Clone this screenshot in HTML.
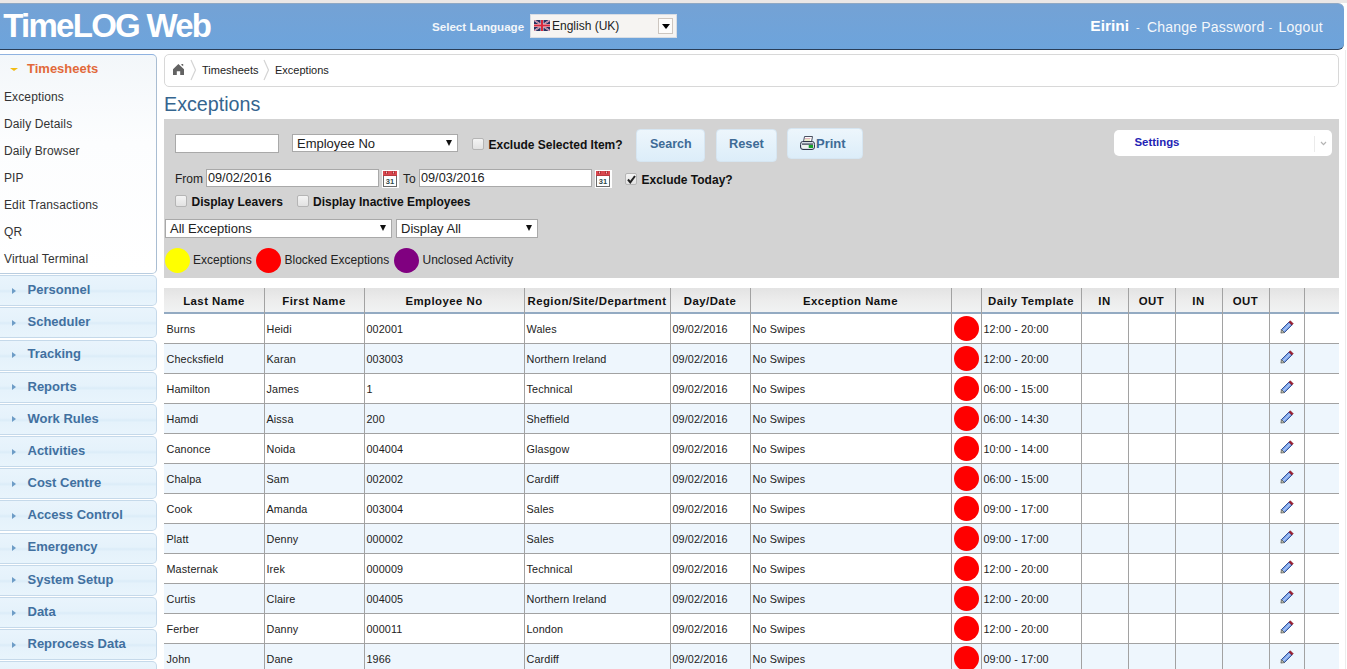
<!DOCTYPE html><html><head><meta charset="utf-8"><style>
*{margin:0;padding:0;box-sizing:border-box}
html,body{width:1347px;height:669px;overflow:hidden;background:#fff;font-family:"Liberation Sans",sans-serif;position:relative}
.a{position:absolute;white-space:nowrap}
.t{position:absolute;white-space:nowrap;line-height:1}
.cb{position:absolute;width:12px;height:12px;border:1px solid #b5b5b5;border-radius:2px;background:linear-gradient(#f4f4f4,#e2e2e2)}
.sel{position:absolute;background:#fff;border:1px solid #a9a9a9}
.btn{position:absolute;border-radius:4px;background:linear-gradient(#edf6fc,#dcedf9);border:1px solid #d6e6f2}
.sh{position:absolute;left:0;width:157px;height:31px;border:1px solid #c5d9ea;border-left:none;border-radius:0 5px 5px 0;background:linear-gradient(#e9f4fc 0%,#e5f2fb 45%,#dbecf8 52%,#e5f2fb 60%,#e8f4fc 100%)}
.tri{position:absolute;width:0;height:0;border-top:3.5px solid transparent;border-bottom:3.5px solid transparent;border-left:4.5px solid #6d9cc6}
</style></head><body>
<div class="a" style="left:0;top:0;width:1347px;height:3px;background:#ebe7e6"></div>
<div class="a" style="left:0;top:3px;width:1344px;height:47px;background:linear-gradient(#74a2d5,#6da4dc);border-top:1px solid #8fa8c4;border-bottom:1px solid #2a3e58;border-radius:0 6px 6px 0"></div>
<div class="a" style="left:1345px;top:50px;width:1px;height:619px;background:#ececec"></div>
<div class="t" style="left:3.3px;top:8.5px;font-size:33px;letter-spacing:-1.75px;font-weight:bold;color:#fff">TimeLOG Web</div>
<div class="t" style="left:432px;top:21px;font-size:11.6px;font-weight:bold;color:#f2f6fa">Select Language</div>
<div class="a" style="left:530px;top:14px;width:147px;height:24px;background:#f6f4f2;border:1px solid #d8dde4"></div>
<svg class="a" style="left:534px;top:20px" width="16" height="11" viewBox="0 0 16 11"><rect width="16" height="11" fill="#27305e"/><path d="M0 0L16 11M16 0L0 11" stroke="#d8d8e8" stroke-width="1.6"/><path d="M0 0L16 11M16 0L0 11" stroke="#c03050" stroke-width="0.6"/><rect x="6.5" y="0" width="3" height="11" fill="#e8e0e8"/><rect x="0" y="4" width="16" height="3" fill="#e8e0e8"/><rect x="7" y="0" width="2" height="11" fill="#d8283c"/><rect x="0" y="4.5" width="16" height="2" fill="#d8283c"/></svg>
<div class="t" style="left:552px;top:19.6px;font-size:12px;color:#222">English (UK)</div>
<div class="a" style="left:658px;top:18px;width:15px;height:16px;background:#fdfcfb;border:1px solid #cdc6c0"></div>
<div class="a" style="left:662px;top:24px;width:0;height:0;border-left:4px solid transparent;border-right:4px solid transparent;border-top:5px solid #000"></div>
<div class="t" style="left:1090.3px;top:18px;font-size:15.5px;font-weight:bold;color:#fff">Eirini</div>
<div class="t" style="left:1136px;top:22px;font-size:11px;color:#f4f7fb">-</div>
<div class="t" style="left:1147px;top:20px;font-size:14px;letter-spacing:0.2px;color:#f4f7fb">Change Password</div>
<div class="t" style="left:1268.5px;top:22px;font-size:11px;color:#f4f7fb">-</div>
<div class="t" style="left:1278.5px;top:20px;font-size:14px;letter-spacing:0.25px;color:#f4f7fb">Logout</div>
<div class="a" style="left:0;top:54px;width:157px;height:220px;border:1px solid #a9bdd2;border-top-color:#8fb2e0;border-bottom-color:#b9cde0;border-left:none;border-radius:0 5px 5px 0;background:linear-gradient(#f3f7fa,#fcfdfe 40%,#fff)"></div>
<div class="a" style="left:9.5px;top:67.8px;width:0;height:0;border-left:4.2px solid transparent;border-right:4.2px solid transparent;border-top:3.6px solid #f2bc14"></div>
<div class="t" style="left:27px;top:61.8px;font-size:13px;font-weight:bold;color:#e2693a">Timesheets</div>
<div class="t" style="left:4px;top:90.5px;font-size:12px;letter-spacing:0.12px;color:#333">Exceptions</div>
<div class="t" style="left:4px;top:117.5px;font-size:12px;letter-spacing:0.12px;color:#333">Daily Details</div>
<div class="t" style="left:4px;top:144.5px;font-size:12px;letter-spacing:0.12px;color:#333">Daily Browser</div>
<div class="t" style="left:4px;top:171.5px;font-size:12px;letter-spacing:0.12px;color:#333">PIP</div>
<div class="t" style="left:4px;top:198.5px;font-size:12px;letter-spacing:0.12px;color:#333">Edit Transactions</div>
<div class="t" style="left:4px;top:225.5px;font-size:12px;letter-spacing:0.12px;color:#333">QR</div>
<div class="t" style="left:4px;top:252.5px;font-size:12px;letter-spacing:0.12px;color:#333">Virtual Terminal</div>
<div class="sh" style="top:275.20px"></div>
<div class="tri" style="left:11.8px;top:287.80px"></div>
<div class="t" style="left:27.5px;top:283.10px;font-size:13px;font-weight:bold;color:#4170a0">Personnel</div>
<div class="sh" style="top:307.37px"></div>
<div class="tri" style="left:11.8px;top:319.97px"></div>
<div class="t" style="left:27.5px;top:315.27px;font-size:13px;font-weight:bold;color:#4170a0">Scheduler</div>
<div class="sh" style="top:339.54px"></div>
<div class="tri" style="left:11.8px;top:352.14px"></div>
<div class="t" style="left:27.5px;top:347.44px;font-size:13px;font-weight:bold;color:#4170a0">Tracking</div>
<div class="sh" style="top:371.71px"></div>
<div class="tri" style="left:11.8px;top:384.31px"></div>
<div class="t" style="left:27.5px;top:379.61px;font-size:13px;font-weight:bold;color:#4170a0">Reports</div>
<div class="sh" style="top:403.88px"></div>
<div class="tri" style="left:11.8px;top:416.48px"></div>
<div class="t" style="left:27.5px;top:411.78px;font-size:13px;font-weight:bold;color:#4170a0">Work Rules</div>
<div class="sh" style="top:436.05px"></div>
<div class="tri" style="left:11.8px;top:448.65px"></div>
<div class="t" style="left:27.5px;top:443.95px;font-size:13px;font-weight:bold;color:#4170a0">Activities</div>
<div class="sh" style="top:468.22px"></div>
<div class="tri" style="left:11.8px;top:480.82px"></div>
<div class="t" style="left:27.5px;top:476.12px;font-size:13px;font-weight:bold;color:#4170a0">Cost Centre</div>
<div class="sh" style="top:500.39px"></div>
<div class="tri" style="left:11.8px;top:512.99px"></div>
<div class="t" style="left:27.5px;top:508.29px;font-size:13px;font-weight:bold;color:#4170a0">Access Control</div>
<div class="sh" style="top:532.56px"></div>
<div class="tri" style="left:11.8px;top:545.16px"></div>
<div class="t" style="left:27.5px;top:540.46px;font-size:13px;font-weight:bold;color:#4170a0">Emergency</div>
<div class="sh" style="top:564.73px"></div>
<div class="tri" style="left:11.8px;top:577.33px"></div>
<div class="t" style="left:27.5px;top:572.63px;font-size:13px;font-weight:bold;color:#4170a0">System Setup</div>
<div class="sh" style="top:596.90px"></div>
<div class="tri" style="left:11.8px;top:609.50px"></div>
<div class="t" style="left:27.5px;top:604.80px;font-size:13px;font-weight:bold;color:#4170a0">Data</div>
<div class="sh" style="top:629.07px"></div>
<div class="tri" style="left:11.8px;top:641.67px"></div>
<div class="t" style="left:27.5px;top:636.97px;font-size:13px;font-weight:bold;color:#4170a0">Reprocess Data</div>
<div class="sh" style="top:661.24px"></div>
<div class="tri" style="left:11.8px;top:673.84px"></div>
<div class="t" style="left:27.5px;top:669.14px;font-size:13px;font-weight:bold;color:#4170a0"></div>
<div class="a" style="left:164px;top:54px;width:1175px;height:33px;border:1px solid #d8d8d8;border-radius:5px;background:#fff"></div>
<svg class="a" style="left:172px;top:63px" width="13" height="13" viewBox="0 0 13 13"><path d="M1 6.2 L6.4 0.9 L12 6.2 L12 12 L8.2 12 L8.2 8.3 L4.8 8.3 L4.8 12 L1 12 Z" fill="#636363"/><path d="M9.4 1 H11.2 V3.3 L9.4 1.9Z" fill="#636363"/></svg>
<svg class="a" style="left:190px;top:59px" width="8" height="24" viewBox="0 0 8 24"><path d="M1 1 L5.5 11 L1 21" fill="none" stroke="#d4d4d4" stroke-width="1.2"/></svg>
<svg class="a" style="left:263px;top:59px" width="8" height="24" viewBox="0 0 8 24"><path d="M1 1 L5.5 11 L1 21" fill="none" stroke="#d4d4d4" stroke-width="1.2"/></svg>
<div class="t" style="left:202px;top:64.8px;font-size:11px;color:#222">Timesheets</div>
<div class="t" style="left:275px;top:64.8px;font-size:11px;color:#222">Exceptions</div>
<div class="t" style="left:164px;top:94.8px;font-size:19.7px;color:#35658f">Exceptions</div>
<div class="a" style="left:164px;top:119px;width:1175px;height:159px;background:#d3d3d3"></div>
<div class="sel" style="left:175px;top:134px;width:104px;height:19px"></div>
<div class="sel" style="left:292px;top:134px;width:166px;height:18px"></div>
<div class="t" style="left:297px;top:137px;font-size:13px;color:#222">Employee No</div>
<div class="a" style="left:446px;top:140px;width:0;height:0;border-left:3.5px solid transparent;border-right:3.5px solid transparent;border-top:6px solid #111"></div>
<div class="cb" style="left:472px;top:138px"></div>
<div class="t" style="left:488.5px;top:138.5px;font-size:12px;font-weight:bold;color:#111">Exclude Selected Item?</div>
<div class="btn" style="left:636px;top:129px;width:69px;height:33px"></div>
<div class="t" style="left:650px;top:138.3px;font-size:12.5px;font-weight:bold;color:#3e6b96">Search</div>
<div class="btn" style="left:716px;top:129px;width:61px;height:33px"></div>
<div class="t" style="left:729px;top:138.3px;font-size:12.8px;font-weight:bold;color:#3e6b96">Reset</div>
<div class="btn" style="left:787px;top:128px;width:76px;height:31px"></div>
<svg class="a" style="left:800px;top:136px" width="15" height="14" viewBox="0 0 15 14"><path d="M4.5 0.5 L12.5 0.5 L11.5 6 L3.5 6Z" fill="#fff" stroke="#4a5060" stroke-width="1"/><path d="M5 2.5 H10.5" stroke="#d9a0b0" stroke-width="0.8"/><path d="M5 4 H10" stroke="#c8c870" stroke-width="0.8"/><path d="M2.5 5.5 H12.5 Q14.5 5.5 14.5 8.5 V11 Q14.5 13.5 12 13.5 H3 Q0.5 13.5 0.5 11 V8.5 Q0.5 5.5 2.5 5.5Z" fill="#d8dde4" stroke="#2e3548" stroke-width="1"/><rect x="2" y="7.5" width="11" height="1.2" fill="#3b4252"/><rect x="8.5" y="9" width="4.5" height="3" fill="#17a32a"/><rect x="2" y="9" width="6.5" height="3" fill="#eef2ee"/></svg>
<div class="t" style="left:816px;top:136.5px;font-size:13px;font-weight:bold;color:#3e6b96">Print</div>
<div class="a" style="left:1114px;top:130px;width:218px;height:26px;background:#fff;border-radius:5px"></div>
<div class="t" style="left:1134.5px;top:136.8px;font-size:11.4px;font-weight:bold;color:#2323b4">Settings</div>
<div class="a" style="left:1314px;top:136px;width:1px;height:16px;background:#ebebeb"></div>
<svg class="a" style="left:1320px;top:141px" width="7" height="5" viewBox="0 0 7 5"><path d="M1 1 L3.5 3.6 L6 1" fill="none" stroke="#b4b4b4" stroke-width="1.2"/></svg>
<div class="t" style="left:175px;top:172.5px;font-size:12px;color:#222">From</div>
<div class="sel" style="left:206px;top:169px;width:173px;height:18px"></div>
<div class="t" style="left:208px;top:172px;font-size:12.7px;color:#222">09/02/2016</div>
<div class="a" style="left:382px;top:170px;line-height:0"><svg width="17" height="18" viewBox="0 0 17 18"><rect x="0" y="0" width="17" height="18" fill="#fdfdfd"/><rect x="1.5" y="1.5" width="13" height="15" fill="#fff" stroke="#6a6a6a" stroke-width="1"/><rect x="1" y="1" width="14" height="5" fill="#d9474e"/><rect x="1" y="5" width="14" height="1" fill="#b83a40"/><rect x="3.5" y="1" width="2" height="3" fill="#8e1c22"/><rect x="4" y="1.5" width="1" height="2" fill="#f3c0c0"/><rect x="10.5" y="1" width="2" height="3" fill="#8e1c22"/><rect x="11" y="1.5" width="1" height="2" fill="#f3c0c0"/><text x="8" y="13.6" font-family="Liberation Sans" font-weight="bold" font-size="7.5" text-anchor="middle" fill="#2f4a4a">31</text></svg></div>
<div class="t" style="left:403px;top:172.5px;font-size:12px;color:#222">To</div>
<div class="sel" style="left:419px;top:169px;width:173px;height:18px"></div>
<div class="t" style="left:421px;top:172px;font-size:12.7px;color:#222">09/03/2016</div>
<div class="a" style="left:595px;top:170px;line-height:0"><svg width="17" height="18" viewBox="0 0 17 18"><rect x="0" y="0" width="17" height="18" fill="#fdfdfd"/><rect x="1.5" y="1.5" width="13" height="15" fill="#fff" stroke="#6a6a6a" stroke-width="1"/><rect x="1" y="1" width="14" height="5" fill="#d9474e"/><rect x="1" y="5" width="14" height="1" fill="#b83a40"/><rect x="3.5" y="1" width="2" height="3" fill="#8e1c22"/><rect x="4" y="1.5" width="1" height="2" fill="#f3c0c0"/><rect x="10.5" y="1" width="2" height="3" fill="#8e1c22"/><rect x="11" y="1.5" width="1" height="2" fill="#f3c0c0"/><text x="8" y="13.6" font-family="Liberation Sans" font-weight="bold" font-size="7.5" text-anchor="middle" fill="#2f4a4a">31</text></svg></div>
<div class="cb" style="left:625px;top:173px"></div>
<svg class="a" style="left:626px;top:174px" width="11" height="11" viewBox="0 0 11 11"><path d="M2 5.5 L4.3 8.3 L9 2" fill="none" stroke="#222" stroke-width="2"/></svg>
<div class="t" style="left:641.5px;top:173.5px;font-size:12px;font-weight:bold;color:#111">Exclude Today?</div>
<div class="cb" style="left:175px;top:195px"></div>
<div class="t" style="left:191.5px;top:195.5px;font-size:12px;font-weight:bold;color:#111">Display Leavers</div>
<div class="cb" style="left:297px;top:195px"></div>
<div class="t" style="left:313px;top:195.5px;font-size:12px;font-weight:bold;color:#111">Display Inactive Employees</div>
<div class="sel" style="left:165px;top:219px;width:227px;height:19px"></div>
<div class="t" style="left:170px;top:222px;font-size:13px;color:#222">All Exceptions</div>
<div class="a" style="left:380px;top:225px;width:0;height:0;border-left:3.5px solid transparent;border-right:3.5px solid transparent;border-top:6px solid #111"></div>
<div class="sel" style="left:396px;top:219px;width:142px;height:19px"></div>
<div class="t" style="left:401px;top:222px;font-size:13px;color:#222">Display All</div>
<div class="a" style="left:525.5px;top:225px;width:0;height:0;border-left:3.5px solid transparent;border-right:3.5px solid transparent;border-top:6px solid #111"></div>
<div class="a" style="left:165px;top:248px;width:25px;height:25px;border-radius:50%;background:#ffff00"></div>
<div class="t" style="left:193px;top:253.5px;font-size:12px;color:#222">Exceptions</div>
<div class="a" style="left:256px;top:248px;width:25px;height:25px;border-radius:50%;background:#ff0000"></div>
<div class="t" style="left:284.5px;top:253.5px;font-size:12px;color:#222">Blocked Exceptions</div>
<div class="a" style="left:394px;top:248px;width:25px;height:25px;border-radius:50%;background:#800080"></div>
<div class="t" style="left:422.5px;top:253.5px;font-size:12px;color:#222">Unclosed Activity</div>
<div class="a" style="left:164px;top:288px;width:1175px;height:24px;background:linear-gradient(#e3e3e3,#ececec 50%,#f1f2f3)"></div>
<div class="a" style="left:164px;top:312px;width:1175px;height:2px;background:#93aac2"></div>
<div class="a" style="left:164px;top:314px;width:1175px;height:29px;background:#ffffff"></div>
<div class="a" style="left:164px;top:343px;width:1175px;height:1px;background:#a2a2a2"></div>
<div class="a" style="left:164px;top:344px;width:1175px;height:29px;background:#eef6fd"></div>
<div class="a" style="left:164px;top:373px;width:1175px;height:1px;background:#a2a2a2"></div>
<div class="a" style="left:164px;top:374px;width:1175px;height:29px;background:#ffffff"></div>
<div class="a" style="left:164px;top:403px;width:1175px;height:1px;background:#a2a2a2"></div>
<div class="a" style="left:164px;top:404px;width:1175px;height:29px;background:#eef6fd"></div>
<div class="a" style="left:164px;top:433px;width:1175px;height:1px;background:#a2a2a2"></div>
<div class="a" style="left:164px;top:434px;width:1175px;height:29px;background:#ffffff"></div>
<div class="a" style="left:164px;top:463px;width:1175px;height:1px;background:#a2a2a2"></div>
<div class="a" style="left:164px;top:464px;width:1175px;height:29px;background:#eef6fd"></div>
<div class="a" style="left:164px;top:493px;width:1175px;height:1px;background:#a2a2a2"></div>
<div class="a" style="left:164px;top:494px;width:1175px;height:29px;background:#ffffff"></div>
<div class="a" style="left:164px;top:523px;width:1175px;height:1px;background:#a2a2a2"></div>
<div class="a" style="left:164px;top:524px;width:1175px;height:29px;background:#eef6fd"></div>
<div class="a" style="left:164px;top:553px;width:1175px;height:1px;background:#a2a2a2"></div>
<div class="a" style="left:164px;top:554px;width:1175px;height:29px;background:#ffffff"></div>
<div class="a" style="left:164px;top:583px;width:1175px;height:1px;background:#a2a2a2"></div>
<div class="a" style="left:164px;top:584px;width:1175px;height:29px;background:#eef6fd"></div>
<div class="a" style="left:164px;top:613px;width:1175px;height:1px;background:#a2a2a2"></div>
<div class="a" style="left:164px;top:614px;width:1175px;height:29px;background:#ffffff"></div>
<div class="a" style="left:164px;top:643px;width:1175px;height:1px;background:#a2a2a2"></div>
<div class="a" style="left:164px;top:644px;width:1175px;height:29px;background:#eef6fd"></div>
<div class="a" style="left:164px;top:673px;width:1175px;height:1px;background:#a2a2a2"></div>
<div class="a" style="left:264px;top:288px;width:1px;height:381px;background:#a2a2a2"></div>
<div class="a" style="left:364px;top:288px;width:1px;height:381px;background:#a2a2a2"></div>
<div class="a" style="left:524px;top:288px;width:1px;height:381px;background:#a2a2a2"></div>
<div class="a" style="left:670px;top:288px;width:1px;height:381px;background:#a2a2a2"></div>
<div class="a" style="left:750px;top:288px;width:1px;height:381px;background:#a2a2a2"></div>
<div class="a" style="left:951px;top:288px;width:1px;height:381px;background:#a2a2a2"></div>
<div class="a" style="left:981px;top:288px;width:1px;height:381px;background:#a2a2a2"></div>
<div class="a" style="left:1081px;top:288px;width:1px;height:381px;background:#a2a2a2"></div>
<div class="a" style="left:1128px;top:288px;width:1px;height:381px;background:#a2a2a2"></div>
<div class="a" style="left:1175px;top:288px;width:1px;height:381px;background:#a2a2a2"></div>
<div class="a" style="left:1222px;top:288px;width:1px;height:381px;background:#a2a2a2"></div>
<div class="a" style="left:1269px;top:288px;width:1px;height:381px;background:#a2a2a2"></div>
<div class="a" style="left:1304px;top:288px;width:1px;height:381px;background:#a2a2a2"></div>
<div class="t" style="left:164px;width:100px;text-align:center;top:296px;font-size:11.4px;letter-spacing:0.45px;font-weight:bold;color:#111">Last Name</div>
<div class="t" style="left:264px;width:100px;text-align:center;top:296px;font-size:11.4px;letter-spacing:0.45px;font-weight:bold;color:#111">First Name</div>
<div class="t" style="left:364px;width:160px;text-align:center;top:296px;font-size:11.4px;letter-spacing:0.45px;font-weight:bold;color:#111">Employee No</div>
<div class="t" style="left:524px;width:146px;text-align:center;top:296px;font-size:11.4px;letter-spacing:0.45px;font-weight:bold;color:#111">Region/Site/Department</div>
<div class="t" style="left:670px;width:80px;text-align:center;top:296px;font-size:11.4px;letter-spacing:0.45px;font-weight:bold;color:#111">Day/Date</div>
<div class="t" style="left:750px;width:201px;text-align:center;top:296px;font-size:11.4px;letter-spacing:0.45px;font-weight:bold;color:#111">Exception Name</div>
<div class="t" style="left:981px;width:100px;text-align:center;top:296px;font-size:11.4px;letter-spacing:0.45px;font-weight:bold;color:#111">Daily Template</div>
<div class="t" style="left:1081px;width:47px;text-align:center;top:296px;font-size:11.4px;letter-spacing:0.45px;font-weight:bold;color:#111">IN</div>
<div class="t" style="left:1128px;width:47px;text-align:center;top:296px;font-size:11.4px;letter-spacing:0.45px;font-weight:bold;color:#111">OUT</div>
<div class="t" style="left:1175px;width:47px;text-align:center;top:296px;font-size:11.4px;letter-spacing:0.45px;font-weight:bold;color:#111">IN</div>
<div class="t" style="left:1222px;width:47px;text-align:center;top:296px;font-size:11.4px;letter-spacing:0.45px;font-weight:bold;color:#111">OUT</div>
<div class="t" style="left:166.5px;top:324px;font-size:10.8px;letter-spacing:0.12px;color:#222">Burns</div>
<div class="t" style="left:266.5px;top:324px;font-size:10.8px;letter-spacing:0.12px;color:#222">Heidi</div>
<div class="t" style="left:366.5px;top:324px;font-size:10.8px;letter-spacing:0.12px;color:#222">002001</div>
<div class="t" style="left:526.5px;top:324px;font-size:10.8px;letter-spacing:0.12px;color:#222">Wales</div>
<div class="t" style="left:672.5px;top:324px;font-size:10.8px;letter-spacing:0.12px;color:#222">09/02/2016</div>
<div class="t" style="left:752.5px;top:324px;font-size:10.8px;letter-spacing:0.12px;color:#222">No Swipes</div>
<div class="t" style="left:983.5px;top:324px;font-size:10.8px;letter-spacing:0.12px;color:#222">12:00 - 20:00</div>
<div class="a" style="left:954px;top:316px;width:25px;height:25px;border-radius:50%;background:#ff0000"></div>
<div class="a" style="left:1280px;top:320px;width:14px;height:14px"><svg width="14" height="14" viewBox="0 0 14 14" style="display:block"><g transform="translate(7,7) rotate(-45)"><rect x="-5.8" y="-2.1" width="10.6" height="4.2" fill="#7aa2ea" stroke="#2c4c94" stroke-width="0.9"/><rect x="-5.8" y="-0.6" width="10.6" height="1.2" fill="#b4cdf6"/><rect x="4.8" y="-2.1" width="2" height="4.2" fill="#a01c30" stroke="#701020" stroke-width="0.5"/><path d="M-5.8 -2.1 L-8.6 0 L-5.8 2.1Z" fill="#c9ccb8" stroke="#3a3a3a" stroke-width="0.6"/></g></svg></div>
<div class="t" style="left:166.5px;top:354px;font-size:10.8px;letter-spacing:0.12px;color:#222">Checksfield</div>
<div class="t" style="left:266.5px;top:354px;font-size:10.8px;letter-spacing:0.12px;color:#222">Karan</div>
<div class="t" style="left:366.5px;top:354px;font-size:10.8px;letter-spacing:0.12px;color:#222">003003</div>
<div class="t" style="left:526.5px;top:354px;font-size:10.8px;letter-spacing:0.12px;color:#222">Northern Ireland</div>
<div class="t" style="left:672.5px;top:354px;font-size:10.8px;letter-spacing:0.12px;color:#222">09/02/2016</div>
<div class="t" style="left:752.5px;top:354px;font-size:10.8px;letter-spacing:0.12px;color:#222">No Swipes</div>
<div class="t" style="left:983.5px;top:354px;font-size:10.8px;letter-spacing:0.12px;color:#222">12:00 - 20:00</div>
<div class="a" style="left:954px;top:346px;width:25px;height:25px;border-radius:50%;background:#ff0000"></div>
<div class="a" style="left:1280px;top:350px;width:14px;height:14px"><svg width="14" height="14" viewBox="0 0 14 14" style="display:block"><g transform="translate(7,7) rotate(-45)"><rect x="-5.8" y="-2.1" width="10.6" height="4.2" fill="#7aa2ea" stroke="#2c4c94" stroke-width="0.9"/><rect x="-5.8" y="-0.6" width="10.6" height="1.2" fill="#b4cdf6"/><rect x="4.8" y="-2.1" width="2" height="4.2" fill="#a01c30" stroke="#701020" stroke-width="0.5"/><path d="M-5.8 -2.1 L-8.6 0 L-5.8 2.1Z" fill="#c9ccb8" stroke="#3a3a3a" stroke-width="0.6"/></g></svg></div>
<div class="t" style="left:166.5px;top:384px;font-size:10.8px;letter-spacing:0.12px;color:#222">Hamilton</div>
<div class="t" style="left:266.5px;top:384px;font-size:10.8px;letter-spacing:0.12px;color:#222">James</div>
<div class="t" style="left:366.5px;top:384px;font-size:10.8px;letter-spacing:0.12px;color:#222">1</div>
<div class="t" style="left:526.5px;top:384px;font-size:10.8px;letter-spacing:0.12px;color:#222">Technical</div>
<div class="t" style="left:672.5px;top:384px;font-size:10.8px;letter-spacing:0.12px;color:#222">09/02/2016</div>
<div class="t" style="left:752.5px;top:384px;font-size:10.8px;letter-spacing:0.12px;color:#222">No Swipes</div>
<div class="t" style="left:983.5px;top:384px;font-size:10.8px;letter-spacing:0.12px;color:#222">06:00 - 15:00</div>
<div class="a" style="left:954px;top:376px;width:25px;height:25px;border-radius:50%;background:#ff0000"></div>
<div class="a" style="left:1280px;top:380px;width:14px;height:14px"><svg width="14" height="14" viewBox="0 0 14 14" style="display:block"><g transform="translate(7,7) rotate(-45)"><rect x="-5.8" y="-2.1" width="10.6" height="4.2" fill="#7aa2ea" stroke="#2c4c94" stroke-width="0.9"/><rect x="-5.8" y="-0.6" width="10.6" height="1.2" fill="#b4cdf6"/><rect x="4.8" y="-2.1" width="2" height="4.2" fill="#a01c30" stroke="#701020" stroke-width="0.5"/><path d="M-5.8 -2.1 L-8.6 0 L-5.8 2.1Z" fill="#c9ccb8" stroke="#3a3a3a" stroke-width="0.6"/></g></svg></div>
<div class="t" style="left:166.5px;top:414px;font-size:10.8px;letter-spacing:0.12px;color:#222">Hamdi</div>
<div class="t" style="left:266.5px;top:414px;font-size:10.8px;letter-spacing:0.12px;color:#222">Aissa</div>
<div class="t" style="left:366.5px;top:414px;font-size:10.8px;letter-spacing:0.12px;color:#222">200</div>
<div class="t" style="left:526.5px;top:414px;font-size:10.8px;letter-spacing:0.12px;color:#222">Sheffield</div>
<div class="t" style="left:672.5px;top:414px;font-size:10.8px;letter-spacing:0.12px;color:#222">09/02/2016</div>
<div class="t" style="left:752.5px;top:414px;font-size:10.8px;letter-spacing:0.12px;color:#222">No Swipes</div>
<div class="t" style="left:983.5px;top:414px;font-size:10.8px;letter-spacing:0.12px;color:#222">06:00 - 14:30</div>
<div class="a" style="left:954px;top:406px;width:25px;height:25px;border-radius:50%;background:#ff0000"></div>
<div class="a" style="left:1280px;top:410px;width:14px;height:14px"><svg width="14" height="14" viewBox="0 0 14 14" style="display:block"><g transform="translate(7,7) rotate(-45)"><rect x="-5.8" y="-2.1" width="10.6" height="4.2" fill="#7aa2ea" stroke="#2c4c94" stroke-width="0.9"/><rect x="-5.8" y="-0.6" width="10.6" height="1.2" fill="#b4cdf6"/><rect x="4.8" y="-2.1" width="2" height="4.2" fill="#a01c30" stroke="#701020" stroke-width="0.5"/><path d="M-5.8 -2.1 L-8.6 0 L-5.8 2.1Z" fill="#c9ccb8" stroke="#3a3a3a" stroke-width="0.6"/></g></svg></div>
<div class="t" style="left:166.5px;top:444px;font-size:10.8px;letter-spacing:0.12px;color:#222">Canonce</div>
<div class="t" style="left:266.5px;top:444px;font-size:10.8px;letter-spacing:0.12px;color:#222">Noida</div>
<div class="t" style="left:366.5px;top:444px;font-size:10.8px;letter-spacing:0.12px;color:#222">004004</div>
<div class="t" style="left:526.5px;top:444px;font-size:10.8px;letter-spacing:0.12px;color:#222">Glasgow</div>
<div class="t" style="left:672.5px;top:444px;font-size:10.8px;letter-spacing:0.12px;color:#222">09/02/2016</div>
<div class="t" style="left:752.5px;top:444px;font-size:10.8px;letter-spacing:0.12px;color:#222">No Swipes</div>
<div class="t" style="left:983.5px;top:444px;font-size:10.8px;letter-spacing:0.12px;color:#222">10:00 - 14:00</div>
<div class="a" style="left:954px;top:436px;width:25px;height:25px;border-radius:50%;background:#ff0000"></div>
<div class="a" style="left:1280px;top:440px;width:14px;height:14px"><svg width="14" height="14" viewBox="0 0 14 14" style="display:block"><g transform="translate(7,7) rotate(-45)"><rect x="-5.8" y="-2.1" width="10.6" height="4.2" fill="#7aa2ea" stroke="#2c4c94" stroke-width="0.9"/><rect x="-5.8" y="-0.6" width="10.6" height="1.2" fill="#b4cdf6"/><rect x="4.8" y="-2.1" width="2" height="4.2" fill="#a01c30" stroke="#701020" stroke-width="0.5"/><path d="M-5.8 -2.1 L-8.6 0 L-5.8 2.1Z" fill="#c9ccb8" stroke="#3a3a3a" stroke-width="0.6"/></g></svg></div>
<div class="t" style="left:166.5px;top:474px;font-size:10.8px;letter-spacing:0.12px;color:#222">Chalpa</div>
<div class="t" style="left:266.5px;top:474px;font-size:10.8px;letter-spacing:0.12px;color:#222">Sam</div>
<div class="t" style="left:366.5px;top:474px;font-size:10.8px;letter-spacing:0.12px;color:#222">002002</div>
<div class="t" style="left:526.5px;top:474px;font-size:10.8px;letter-spacing:0.12px;color:#222">Cardiff</div>
<div class="t" style="left:672.5px;top:474px;font-size:10.8px;letter-spacing:0.12px;color:#222">09/02/2016</div>
<div class="t" style="left:752.5px;top:474px;font-size:10.8px;letter-spacing:0.12px;color:#222">No Swipes</div>
<div class="t" style="left:983.5px;top:474px;font-size:10.8px;letter-spacing:0.12px;color:#222">06:00 - 15:00</div>
<div class="a" style="left:954px;top:466px;width:25px;height:25px;border-radius:50%;background:#ff0000"></div>
<div class="a" style="left:1280px;top:470px;width:14px;height:14px"><svg width="14" height="14" viewBox="0 0 14 14" style="display:block"><g transform="translate(7,7) rotate(-45)"><rect x="-5.8" y="-2.1" width="10.6" height="4.2" fill="#7aa2ea" stroke="#2c4c94" stroke-width="0.9"/><rect x="-5.8" y="-0.6" width="10.6" height="1.2" fill="#b4cdf6"/><rect x="4.8" y="-2.1" width="2" height="4.2" fill="#a01c30" stroke="#701020" stroke-width="0.5"/><path d="M-5.8 -2.1 L-8.6 0 L-5.8 2.1Z" fill="#c9ccb8" stroke="#3a3a3a" stroke-width="0.6"/></g></svg></div>
<div class="t" style="left:166.5px;top:504px;font-size:10.8px;letter-spacing:0.12px;color:#222">Cook</div>
<div class="t" style="left:266.5px;top:504px;font-size:10.8px;letter-spacing:0.12px;color:#222">Amanda</div>
<div class="t" style="left:366.5px;top:504px;font-size:10.8px;letter-spacing:0.12px;color:#222">003004</div>
<div class="t" style="left:526.5px;top:504px;font-size:10.8px;letter-spacing:0.12px;color:#222">Sales</div>
<div class="t" style="left:672.5px;top:504px;font-size:10.8px;letter-spacing:0.12px;color:#222">09/02/2016</div>
<div class="t" style="left:752.5px;top:504px;font-size:10.8px;letter-spacing:0.12px;color:#222">No Swipes</div>
<div class="t" style="left:983.5px;top:504px;font-size:10.8px;letter-spacing:0.12px;color:#222">09:00 - 17:00</div>
<div class="a" style="left:954px;top:496px;width:25px;height:25px;border-radius:50%;background:#ff0000"></div>
<div class="a" style="left:1280px;top:500px;width:14px;height:14px"><svg width="14" height="14" viewBox="0 0 14 14" style="display:block"><g transform="translate(7,7) rotate(-45)"><rect x="-5.8" y="-2.1" width="10.6" height="4.2" fill="#7aa2ea" stroke="#2c4c94" stroke-width="0.9"/><rect x="-5.8" y="-0.6" width="10.6" height="1.2" fill="#b4cdf6"/><rect x="4.8" y="-2.1" width="2" height="4.2" fill="#a01c30" stroke="#701020" stroke-width="0.5"/><path d="M-5.8 -2.1 L-8.6 0 L-5.8 2.1Z" fill="#c9ccb8" stroke="#3a3a3a" stroke-width="0.6"/></g></svg></div>
<div class="t" style="left:166.5px;top:534px;font-size:10.8px;letter-spacing:0.12px;color:#222">Platt</div>
<div class="t" style="left:266.5px;top:534px;font-size:10.8px;letter-spacing:0.12px;color:#222">Denny</div>
<div class="t" style="left:366.5px;top:534px;font-size:10.8px;letter-spacing:0.12px;color:#222">000002</div>
<div class="t" style="left:526.5px;top:534px;font-size:10.8px;letter-spacing:0.12px;color:#222">Sales</div>
<div class="t" style="left:672.5px;top:534px;font-size:10.8px;letter-spacing:0.12px;color:#222">09/02/2016</div>
<div class="t" style="left:752.5px;top:534px;font-size:10.8px;letter-spacing:0.12px;color:#222">No Swipes</div>
<div class="t" style="left:983.5px;top:534px;font-size:10.8px;letter-spacing:0.12px;color:#222">09:00 - 17:00</div>
<div class="a" style="left:954px;top:526px;width:25px;height:25px;border-radius:50%;background:#ff0000"></div>
<div class="a" style="left:1280px;top:530px;width:14px;height:14px"><svg width="14" height="14" viewBox="0 0 14 14" style="display:block"><g transform="translate(7,7) rotate(-45)"><rect x="-5.8" y="-2.1" width="10.6" height="4.2" fill="#7aa2ea" stroke="#2c4c94" stroke-width="0.9"/><rect x="-5.8" y="-0.6" width="10.6" height="1.2" fill="#b4cdf6"/><rect x="4.8" y="-2.1" width="2" height="4.2" fill="#a01c30" stroke="#701020" stroke-width="0.5"/><path d="M-5.8 -2.1 L-8.6 0 L-5.8 2.1Z" fill="#c9ccb8" stroke="#3a3a3a" stroke-width="0.6"/></g></svg></div>
<div class="t" style="left:166.5px;top:564px;font-size:10.8px;letter-spacing:0.12px;color:#222">Masternak</div>
<div class="t" style="left:266.5px;top:564px;font-size:10.8px;letter-spacing:0.12px;color:#222">Irek</div>
<div class="t" style="left:366.5px;top:564px;font-size:10.8px;letter-spacing:0.12px;color:#222">000009</div>
<div class="t" style="left:526.5px;top:564px;font-size:10.8px;letter-spacing:0.12px;color:#222">Technical</div>
<div class="t" style="left:672.5px;top:564px;font-size:10.8px;letter-spacing:0.12px;color:#222">09/02/2016</div>
<div class="t" style="left:752.5px;top:564px;font-size:10.8px;letter-spacing:0.12px;color:#222">No Swipes</div>
<div class="t" style="left:983.5px;top:564px;font-size:10.8px;letter-spacing:0.12px;color:#222">12:00 - 20:00</div>
<div class="a" style="left:954px;top:556px;width:25px;height:25px;border-radius:50%;background:#ff0000"></div>
<div class="a" style="left:1280px;top:560px;width:14px;height:14px"><svg width="14" height="14" viewBox="0 0 14 14" style="display:block"><g transform="translate(7,7) rotate(-45)"><rect x="-5.8" y="-2.1" width="10.6" height="4.2" fill="#7aa2ea" stroke="#2c4c94" stroke-width="0.9"/><rect x="-5.8" y="-0.6" width="10.6" height="1.2" fill="#b4cdf6"/><rect x="4.8" y="-2.1" width="2" height="4.2" fill="#a01c30" stroke="#701020" stroke-width="0.5"/><path d="M-5.8 -2.1 L-8.6 0 L-5.8 2.1Z" fill="#c9ccb8" stroke="#3a3a3a" stroke-width="0.6"/></g></svg></div>
<div class="t" style="left:166.5px;top:594px;font-size:10.8px;letter-spacing:0.12px;color:#222">Curtis</div>
<div class="t" style="left:266.5px;top:594px;font-size:10.8px;letter-spacing:0.12px;color:#222">Claire</div>
<div class="t" style="left:366.5px;top:594px;font-size:10.8px;letter-spacing:0.12px;color:#222">004005</div>
<div class="t" style="left:526.5px;top:594px;font-size:10.8px;letter-spacing:0.12px;color:#222">Northern Ireland</div>
<div class="t" style="left:672.5px;top:594px;font-size:10.8px;letter-spacing:0.12px;color:#222">09/02/2016</div>
<div class="t" style="left:752.5px;top:594px;font-size:10.8px;letter-spacing:0.12px;color:#222">No Swipes</div>
<div class="t" style="left:983.5px;top:594px;font-size:10.8px;letter-spacing:0.12px;color:#222">12:00 - 20:00</div>
<div class="a" style="left:954px;top:586px;width:25px;height:25px;border-radius:50%;background:#ff0000"></div>
<div class="a" style="left:1280px;top:590px;width:14px;height:14px"><svg width="14" height="14" viewBox="0 0 14 14" style="display:block"><g transform="translate(7,7) rotate(-45)"><rect x="-5.8" y="-2.1" width="10.6" height="4.2" fill="#7aa2ea" stroke="#2c4c94" stroke-width="0.9"/><rect x="-5.8" y="-0.6" width="10.6" height="1.2" fill="#b4cdf6"/><rect x="4.8" y="-2.1" width="2" height="4.2" fill="#a01c30" stroke="#701020" stroke-width="0.5"/><path d="M-5.8 -2.1 L-8.6 0 L-5.8 2.1Z" fill="#c9ccb8" stroke="#3a3a3a" stroke-width="0.6"/></g></svg></div>
<div class="t" style="left:166.5px;top:624px;font-size:10.8px;letter-spacing:0.12px;color:#222">Ferber</div>
<div class="t" style="left:266.5px;top:624px;font-size:10.8px;letter-spacing:0.12px;color:#222">Danny</div>
<div class="t" style="left:366.5px;top:624px;font-size:10.8px;letter-spacing:0.12px;color:#222">000011</div>
<div class="t" style="left:526.5px;top:624px;font-size:10.8px;letter-spacing:0.12px;color:#222">London</div>
<div class="t" style="left:672.5px;top:624px;font-size:10.8px;letter-spacing:0.12px;color:#222">09/02/2016</div>
<div class="t" style="left:752.5px;top:624px;font-size:10.8px;letter-spacing:0.12px;color:#222">No Swipes</div>
<div class="t" style="left:983.5px;top:624px;font-size:10.8px;letter-spacing:0.12px;color:#222">12:00 - 20:00</div>
<div class="a" style="left:954px;top:616px;width:25px;height:25px;border-radius:50%;background:#ff0000"></div>
<div class="a" style="left:1280px;top:620px;width:14px;height:14px"><svg width="14" height="14" viewBox="0 0 14 14" style="display:block"><g transform="translate(7,7) rotate(-45)"><rect x="-5.8" y="-2.1" width="10.6" height="4.2" fill="#7aa2ea" stroke="#2c4c94" stroke-width="0.9"/><rect x="-5.8" y="-0.6" width="10.6" height="1.2" fill="#b4cdf6"/><rect x="4.8" y="-2.1" width="2" height="4.2" fill="#a01c30" stroke="#701020" stroke-width="0.5"/><path d="M-5.8 -2.1 L-8.6 0 L-5.8 2.1Z" fill="#c9ccb8" stroke="#3a3a3a" stroke-width="0.6"/></g></svg></div>
<div class="t" style="left:166.5px;top:654px;font-size:10.8px;letter-spacing:0.12px;color:#222">John</div>
<div class="t" style="left:266.5px;top:654px;font-size:10.8px;letter-spacing:0.12px;color:#222">Dane</div>
<div class="t" style="left:366.5px;top:654px;font-size:10.8px;letter-spacing:0.12px;color:#222">1966</div>
<div class="t" style="left:526.5px;top:654px;font-size:10.8px;letter-spacing:0.12px;color:#222">Cardiff</div>
<div class="t" style="left:672.5px;top:654px;font-size:10.8px;letter-spacing:0.12px;color:#222">09/02/2016</div>
<div class="t" style="left:752.5px;top:654px;font-size:10.8px;letter-spacing:0.12px;color:#222">No Swipes</div>
<div class="t" style="left:983.5px;top:654px;font-size:10.8px;letter-spacing:0.12px;color:#222">09:00 - 17:00</div>
<div class="a" style="left:954px;top:646px;width:25px;height:25px;border-radius:50%;background:#ff0000"></div>
<div class="a" style="left:1280px;top:650px;width:14px;height:14px"><svg width="14" height="14" viewBox="0 0 14 14" style="display:block"><g transform="translate(7,7) rotate(-45)"><rect x="-5.8" y="-2.1" width="10.6" height="4.2" fill="#7aa2ea" stroke="#2c4c94" stroke-width="0.9"/><rect x="-5.8" y="-0.6" width="10.6" height="1.2" fill="#b4cdf6"/><rect x="4.8" y="-2.1" width="2" height="4.2" fill="#a01c30" stroke="#701020" stroke-width="0.5"/><path d="M-5.8 -2.1 L-8.6 0 L-5.8 2.1Z" fill="#c9ccb8" stroke="#3a3a3a" stroke-width="0.6"/></g></svg></div>
</body></html>
